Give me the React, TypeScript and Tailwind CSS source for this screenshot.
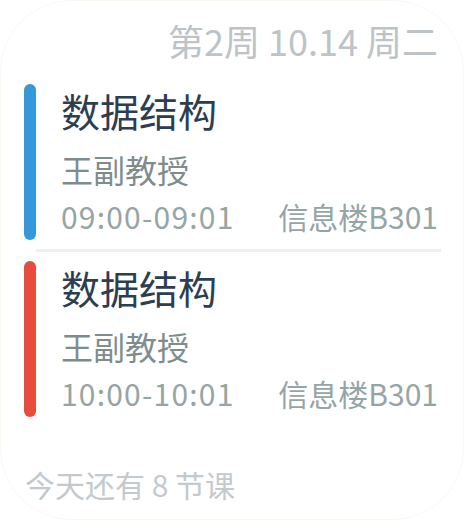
import React from 'react'

interface Lesson {
  id: number
  name: string
  teacher: string
  time: string
  room: string
  color: string
}

const lessons: Lesson[] = [
  { id: 1, name: '数据结构', teacher: '王副教授', time: '09:00-09:01', room: '信息楼B301', color: 'bg-[#3498db]' },
  { id: 2, name: '数据结构', teacher: '王副教授', time: '10:00-10:01', room: '信息楼B301', color: 'bg-[#e74c3c]' },
]

export default function App() {
  return (
    <div className="w-[464px] h-[520px] bg-white font-['Noto_Sans_CJK_SC','Noto_Sans',sans-serif]">
      <div className="h-full rounded-[72px] border border-[#fbf8f4] flex flex-col">
        {/* Header */}
        <div className="pt-[17px] pr-[25px] text-right text-[36px] leading-[44px] text-[#bdc3c7]">
          第2周 10.14 周二
        </div>

        {/* Lessons */}
        <div className="mt-[22px] flex flex-col">
          {lessons.map((l, i) => (
            <div key={l.id}>
              {i > 0 && <div className="ml-[35px] mr-[22px] my-[9px] h-[3px] bg-[#ecf0f1]" />}
              <div className="flex">
                <div className={`ml-[23px] w-[12px] h-[156px] rounded-full ${l.color}`} />
                <div className="flex-1 pl-[25px] pr-[25px] pt-[4px]">
                  <div className="text-[39px] leading-[44px] text-[#2c3e50]">{l.name}</div>
                  <div className="mt-[17px] text-[32px] leading-[40px] text-[#7f8c8d]">{l.teacher}</div>
                  <div className="mt-[9px] flex justify-between text-[30px] leading-[36px] text-[#95a5a6]">
                    <span className="tracking-[1.2px]">{l.time}</span>
                    <span>{l.room}</span>
                  </div>
                </div>
              </div>
            </div>
          ))}
        </div>

        {/* Footer */}
        <div className="mt-[49px] pl-[24px] text-[30px] leading-[36px] text-[#c3c9cc]">
          今天还有 8 节课
        </div>
      </div>
    </div>
  )
}
